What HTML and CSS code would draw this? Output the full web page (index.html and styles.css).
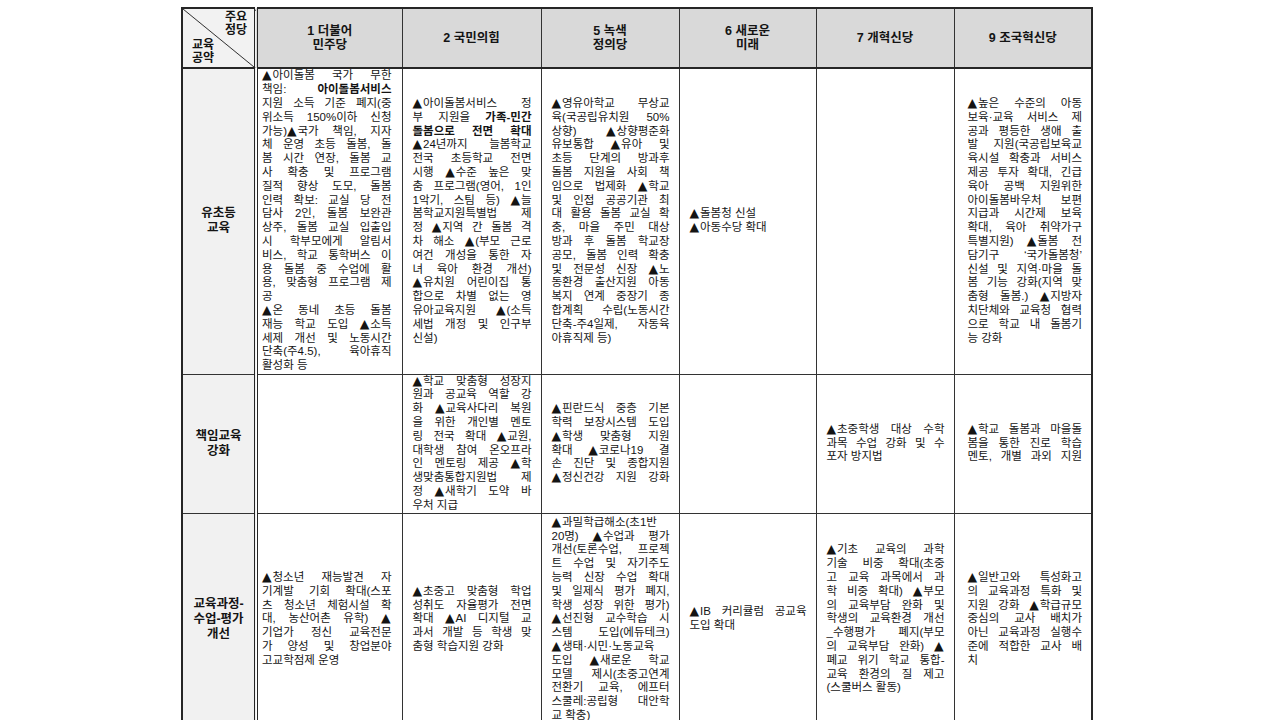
FILE: index.html
```html
<!DOCTYPE html>
<html lang="ko">
<head>
<meta charset="utf-8">
<title>정당별 교육 공약</title>
<link rel="stylesheet" href="styles.css">
</head>
<body>
<div class="page">
<table class="grid">
<colgroup>
<col class="w0"><col class="w1"><col class="w2"><col class="w3"><col class="w4"><col class="w5"><col class="w6">
</colgroup>
<tr class="rh">
<th class="corner"><div class="cbox"><div class="ctr">주요<br>정당</div><div class="cbl">교육<br>공약</div></div></th>
<th>1 더불어<br>민주당</th>
<th>2 국민의힘</th>
<th>5 녹색<br>정의당</th>
<th>6 새로운<br>미래</th>
<th>7 개혁신당</th>
<th>9 조국혁신당</th>
</tr>
<tr class="r1">
<td class="lab">유초등<br>교육</td>
<td class="c c1">
<div class="j"><span class="t">▲</span>아이돌봄 국가 무한</div>
<div class="j">책임: <b>아이돌봄서비스</b></div>
<div class="j">지원 소득 기준 폐지(중</div>
<div class="j">위소득 150%이하 신청</div>
<div class="j">가능)<span class="t">▲</span>국가 책임, 지자</div>
<div class="j">체 운영 초등 돌봄, 돌</div>
<div class="j">봄 시간 연장, 돌봄 교</div>
<div class="j">사 확충 및 프로그램</div>
<div class="j">질적 향상 도모, 돌봄</div>
<div class="j">인력 확보: 교실 당 전</div>
<div class="j">담사 2인, 돌봄 보완관</div>
<div class="j">상주, 돌봄 교실 입출입</div>
<div class="j">시 학부모에게 알림서</div>
<div class="j">비스, 학교 통학버스 이</div>
<div class="j">용 돌봄 중 수업에 활</div>
<div class="j">용, 맞춤형 프로그램 제</div>
<div class="e">공</div>
<div class="j"><span class="t">▲</span>온 동네 초등 돌봄</div>
<div class="j">재능 학교 도입 <span class="t">▲</span>소득</div>
<div class="j">세제 개선 및 노동시간</div>
<div class="j">단축(주4.5), 육아휴직</div>
<div class="e">활성화 등</div>
</td>
<td class="c">
<div class="j"><span class="t">▲</span>아이돌봄서비스 정</div>
<div class="j">부 지원을 <b>가족-민간</b></div>
<div class="j"><b>돌봄으로 전면 확대</b></div>
<div class="j"><span class="t">▲</span>24년까지 늘봄학교</div>
<div class="j">전국 초등학교 전면</div>
<div class="j">시행 <span class="t">▲</span>수준 높은 맞</div>
<div class="j">춤 프로그램(영어, 1인</div>
<div class="j">1악기, 스팀 등) <span class="t">▲</span>늘</div>
<div class="j">봄학교지원특별법 제</div>
<div class="j">정 <span class="t">▲</span>지역 간 돌봄 격</div>
<div class="j">차 해소 <span class="t">▲</span>(부모 근로</div>
<div class="j">여건 개성을 통한 자</div>
<div class="j">녀 육아 환경 개선)</div>
<div class="j"><span class="t">▲</span>유치원 어린이집 통</div>
<div class="j">합으로 차별 없는 영</div>
<div class="j">유아교육지원 <span class="t">▲</span>(소득</div>
<div class="j">세법 개정 및 인구부</div>
<div class="e">신설)</div>
</td>
<td class="c">
<div class="j"><span class="t">▲</span>영유아학교 무상교</div>
<div class="j">육(국공립유치원 50%</div>
<div class="j">상향) <span class="t">▲</span>상향평준화</div>
<div class="j">유보통합 <span class="t">▲</span>유아 및</div>
<div class="j">초등 단계의 방과후</div>
<div class="j">돌봄 지원을 사회 책</div>
<div class="j">임으로 법제화 <span class="t">▲</span>학교</div>
<div class="j">및 인접 공공기관 최</div>
<div class="j">대 활용 돌봄 교실 확</div>
<div class="j">충, 마을 주민 대상</div>
<div class="j">방과 후 돌봄 학교장</div>
<div class="j">공모, 돌봄 인력 확충</div>
<div class="j">및 전문성 신장 <span class="t">▲</span>노</div>
<div class="j">동환경 출산지원 아동</div>
<div class="j">복지 연계 중장기 종</div>
<div class="j">합계획 수립(노동시간</div>
<div class="j">단축-주4일제, 자동육</div>
<div class="e">아휴직제 등)</div>
</td>
<td class="c">
<div class="e"><span class="t">▲</span>돌봄청 신설</div>
<div class="e"><span class="t">▲</span>아동수당 확대</div>
</td>
<td class="c"></td>
<td class="c c6">
<div class="j"><span class="t">▲</span>높은 수준의 아동</div>
<div class="j">보육·교육 서비스 제</div>
<div class="j">공과 평등한 생애 출</div>
<div class="j">발 지원(국공립보육교</div>
<div class="j">육시설 확충과 서비스</div>
<div class="j">제공 투자 확대, 긴급</div>
<div class="j">육아 공백 지원위한</div>
<div class="j">아이돌봄바우처 보편</div>
<div class="j">지급과 시간제 보육</div>
<div class="j">확대, 육아 취약가구</div>
<div class="j">특별지원) <span class="t">▲</span>돌봄 전</div>
<div class="j">담기구 ‘국가돌봄청’</div>
<div class="j">신설 및 지역·마을 돌</div>
<div class="j">봄 기능 강화(지역 맞</div>
<div class="j">춤형 돌봄.) <span class="t">▲</span>지방자</div>
<div class="j">치단체와 교육청 협력</div>
<div class="j">으로 학교 내 돌봄기</div>
<div class="e">능 강화</div>
</td>
</tr>
<tr class="r2">
<td class="lab">책임교육<br>강화</td>
<td class="c c1"></td>
<td class="c">
<div class="j"><span class="t">▲</span>학교 맞춤형 성장지</div>
<div class="j">원과 공교육 역할 강</div>
<div class="j">화 <span class="t">▲</span>교육사다리 복원</div>
<div class="j">을 위한 개인별 멘토</div>
<div class="j">링 전국 확대 <span class="t">▲</span>교원,</div>
<div class="j">대학생 참여 온오프라</div>
<div class="j">인 멘토링 제공 <span class="t">▲</span>학</div>
<div class="j">생맞춤통합지원법 제</div>
<div class="j">정 <span class="t">▲</span>새학기 도약 바</div>
<div class="e">우처 지급</div>
</td>
<td class="c">
<div class="j"><span class="t">▲</span>핀란드식 중층 기본</div>
<div class="j">학력 보장시스템 도입</div>
<div class="j"><span class="t">▲</span>학생 맞춤형 지원</div>
<div class="j">확대 <span class="t">▲</span>코로나19 결</div>
<div class="j">손 진단 및 종합지원</div>
<div class="j"><span class="t">▲</span>정신건강 지원 강화</div>
</td>
<td class="c"></td>
<td class="c">
<div class="j"><span class="t">▲</span>초중학생 대상 수학</div>
<div class="j">과목 수업 강화 및 수</div>
<div class="e">포자 방지법</div>
</td>
<td class="c c6">
<div class="j"><span class="t">▲</span>학교 돌봄과 마을돌</div>
<div class="j">봄을 통한 진로 학습</div>
<div class="j">멘토, 개별 과외 지원</div>
</td>
</tr>
<tr class="r3">
<td class="lab">교육과정-<br>수업-평가<br>개선</td>
<td class="c c1">
<div class="j"><span class="t">▲</span>청소년 재능발견 자</div>
<div class="j">기계발 기회 확대(스포</div>
<div class="j">츠 청소년 체험시설 확</div>
<div class="j">대, 농산어촌 유학) <span class="t">▲</span></div>
<div class="j">기업가 정신 교육전문</div>
<div class="j">가 양성 및 창업분야</div>
<div class="e">고교학점제 운영</div>
</td>
<td class="c">
<div class="j"><span class="t">▲</span>초중고 맞춤형 학업</div>
<div class="j">성취도 자율평가 전면</div>
<div class="j">확대 <span class="t">▲</span>AI 디지털 교</div>
<div class="j">과서 개발 등 학생 맞</div>
<div class="e">춤형 학습지원 강화</div>
</td>
<td class="c">
<div class="j"><span class="t">▲</span>과밀학급해소(초1반</div>
<div class="j">20명) <span class="t">▲</span>수업과 평가</div>
<div class="j">개선(토론수업, 프로젝</div>
<div class="j">트 수업 및 자기주도</div>
<div class="j">능력 신장 수업 확대</div>
<div class="j">및 일제식 평가 폐지,</div>
<div class="j">학생 성장 위한 평가)</div>
<div class="j"><span class="t">▲</span>선진형 교수학습 시</div>
<div class="j">스템 도입(에듀테크)</div>
<div class="j"><span class="t">▲</span>생태·시민·노동교육</div>
<div class="j">도입 <span class="t">▲</span>새로운 학교</div>
<div class="j">모델 제시(초중고연계</div>
<div class="j">전환기 교육, 에프터</div>
<div class="j">스쿨레:공립형 대안학</div>
<div class="e">교 확충)</div>
</td>
<td class="c">
<div class="j"><span class="t">▲</span>IB 커리큘럼 공교육</div>
<div class="e">도입 확대</div>
</td>
<td class="c">
<div class="j"><span class="t">▲</span>기초 교육의 과학</div>
<div class="j">기술 비중 확대(초중</div>
<div class="j">고 교육 과목에서 과</div>
<div class="j">학 비중 확대) <span class="t">▲</span>부모</div>
<div class="j">의 교육부담 완화 및</div>
<div class="j">학생의 교육환경 개선</div>
<div class="j">_수행평가 폐지(부모</div>
<div class="j">의 교육부담 완화) <span class="t">▲</span></div>
<div class="j">폐교 위기 학교 통합-</div>
<div class="j">교육 환경의 질 제고</div>
<div class="e">(스쿨버스 활동)</div>
</td>
<td class="c c6">
<div class="j"><span class="t">▲</span>일반고와 특성화고</div>
<div class="j">의 교육과정 특화 및</div>
<div class="j">지원 강화 <span class="t">▲</span>학급규모</div>
<div class="j">중심의 교사 배치가</div>
<div class="j">아닌 교육과정 실행수</div>
<div class="j">준에 적합한 교사 배</div>
<div class="e">치</div>
</td>
</tr>
</table>
</div>
</body>
</html>
```
FILE: styles.css
```css
html, body {
  margin: 0;
  padding: 0;
  background: #ffffff;
  overflow: hidden;
}
body {
  font-family: "Liberation Sans", "Noto Sans CJK KR", sans-serif;
  color: #141414;
}
.page {
  padding: 7px 0 0 181px;
}
.grid {
  border-collapse: collapse;
  table-layout: fixed;
  width: 910px;
  border: 2px solid #262626;
}
.w0 { width: 74px; }
.w1 { width: 146px; }
.w2 { width: 139px; }
.w3 { width: 138px; }
.w4 { width: 137px; }
.w5 { width: 138px; }
.w6 { width: 138px; }

.grid th,
.grid td {
  border: 1px solid #333333;
  padding: 0;
  vertical-align: middle;
}
.rh { height: 59px; }
.r1 { height: 306px; }
.r2 { height: 139px; }
.r3 { height: 213px; }

.grid th {
  background: #d9d9d9;
  font-weight: bold;
  font-size: 12.5px;
  line-height: 14px;
  text-align: center;
  border-bottom: 2px solid #262626;
}
.grid th.corner {
  background-color: #f2f2f2;
  background-image: linear-gradient(to top right, transparent calc(50% - 0.8px), #333333 50%, transparent calc(50% + 0.8px));
  border-right: 4px double #262626;
  vertical-align: top;
}
.cbox {
  height: 58px;
  display: flex;
  flex-direction: column;
  justify-content: space-between;
  font-size: 12px;
  line-height: 13px;
}
.ctr {
  text-align: right;
  padding: 2px 7px 0 0;
}
.cbl {
  text-align: left;
  padding: 0 0 2px 9px;
}
.lab {
  background: #f1f1f1;
  font-weight: bold;
  font-size: 12.5px;
  line-height: 15px;
  text-align: center;
  border-right: 4px double #262626 !important;
}
.c {
  font-size: 11.5px;
  line-height: 13.8px;
  padding: 0 9px 0 10px !important;
}
.c.c1 { padding: 0 10px 0 4px !important; }
.c.c6 { padding: 0 9px 0 13px !important; }
.c .j {
  white-space: nowrap;
  text-align: justify;
  text-align-last: justify;
  text-justify: inter-word;
}
.c .e {
  white-space: nowrap;
  text-align: left;
}
.c .t {
  display: inline-block;
  font-family: "DejaVu Sans", sans-serif;
  font-size: 12.5px;
  line-height: 10px;
  width: 10.5px;
  text-align: left;
}
.c b {
  font-weight: bold;
}
```
